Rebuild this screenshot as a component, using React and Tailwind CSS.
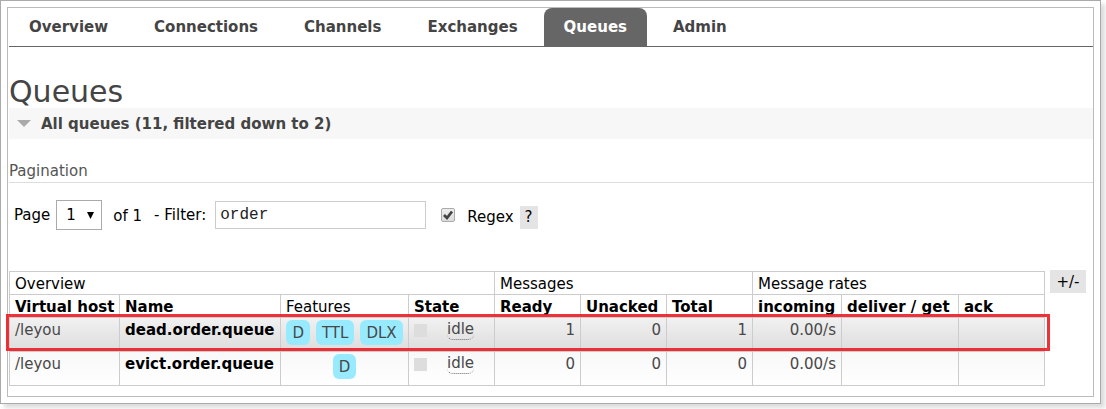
import { useState } from "react";

const tabs = ["Overview", "Connections", "Channels", "Exchanges", "Queues", "Admin"];

const queues = [
  {
    vhost: "/leyou",
    name: "dead.order.queue",
    features: ["D", "TTL", "DLX"],
    state: "idle",
    counts: [1, 0, 1],
    incoming: "0.00/s",
    row: "bg-linear-to-b from-[#f1f1f1] to-[#dcdcdc]",
  },
  {
    vhost: "/leyou",
    name: "evict.order.queue",
    features: ["D"],
    state: "idle",
    counts: [0, 0, 0],
    incoming: "0.00/s",
    row: "bg-linear-to-b from-[#f8f8f8] to-white",
  },
];

const cell = "border border-[#ccc] px-[5px] pt-[2px] pb-0 whitespace-nowrap";
const sortable = ["State", "Ready", "Unacked", "Total", "incoming", "deliver / get", "ack"];

function Nav() {
  return (
    <nav className="border-b border-[#666]">
      <ul className="flex gap-[6px]">
        {tabs.map((tab) => (
          <li key={tab}>
            <a
              href={"#" + tab.toLowerCase()}
              className={
                tab === "Queues"
                  ? "block rounded-t-lg bg-[#666] px-5 py-[9px] leading-5 font-bold text-white"
                  : "block px-5 py-[9px] leading-5 font-bold text-[#444]"
              }
            >
              {tab}
            </a>
          </li>
        ))}
      </ul>
    </nav>
  );
}

function Filters() {
  const [filter, setFilter] = useState("order");
  const [regex, setRegex] = useState(true);
  return (
    <form className="mt-[17px] flex h-[30px] items-center pl-[5px]" onSubmit={(e) => e.preventDefault()}>
      <label htmlFor="page">Page</label>
      <div className="ml-[6px] grid items-center">
        <select
          id="page"
          defaultValue="1"
          className="col-start-1 row-start-1 h-[30px] w-[46px] appearance-none border border-[#aaa] bg-white pl-[9px]"
        >
          <option>1</option>
        </select>
        <svg className="pointer-events-none col-start-1 row-start-1 mr-2 h-2 w-[7px] justify-self-end" viewBox="0 0 7 8">
          <path d="M0 1h7L3.500 8z" fill="#000" />
        </svg>
      </div>
      <span className="ml-[11px] pt-[2px]">of 1</span>
      <label htmlFor="filter" className="ml-3">- Filter:</label>
      <input
        id="filter"
        type="text"
        value={filter}
        onChange={(e) => setFilter(e.target.value)}
        className="ml-[9px] h-7 w-[211px] border border-[#ccc] px-1 font-['Liberation_Mono',monospace] text-base text-[#222]"
      />
      <div className="ml-[15px] grid">
        <input
          id="regex"
          type="checkbox"
          checked={regex}
          onChange={(e) => setRegex(e.target.checked)}
          className="col-start-1 row-start-1 size-[14px] appearance-none rounded-xs border border-[#aaa] bg-linear-to-b from-[#eee] to-[#ddd]"
        />
        {regex && (
          <svg className="pointer-events-none col-start-1 row-start-1 size-[14px]" viewBox="0 0 14 14">
            <path d="M3 7l3 3L11 3.500" fill="none" stroke="#444" strokeWidth="2.800" />
          </svg>
        )}
      </div>
      <label htmlFor="regex" className="ml-3 pt-1">Regex</label>
      <button type="button" className="mt-1 ml-[6px] h-[23px] w-[18px] bg-[#e4e4e4]">?</button>
    </form>
  );
}

function QueueTable() {
  return (
    <div className="relative min-w-0 flex-1">
      <table className="w-full table-fixed border-collapse leading-5">
        <colgroup>
          <col className="w-[110px]" />
          <col className="w-[161px]" />
          <col className="w-[128px]" />
          <col className="w-[86px]" />
          <col className="w-[86px]" />
          <col className="w-[86px]" />
          <col className="w-[86px]" />
          <col className="w-[89px]" />
          <col className="w-[117px]" />
          <col />
        </colgroup>
        <thead className="text-left">
          <tr className="h-[23px]">
            <th colSpan={4} className={cell + " font-normal"}>Overview</th>
            <th colSpan={3} className={cell + " font-normal"}>Messages</th>
            <th colSpan={3} className={cell + " font-normal"}>Message rates</th>
          </tr>
          <tr className="h-[23px]">
            <th className={cell}>Virtual host</th>
            <th className={cell}>Name</th>
            <th className={cell + " font-normal"}>Features</th>
            {sortable.map((title) => (
              <th key={title} className={cell}>{title}</th>
            ))}
          </tr>
        </thead>
        <tbody className="text-[#484848]">
          {queues.map((q) => (
            <tr key={q.name} className={"h-[34px] align-top " + q.row}>
              <td className={cell}>{q.vhost}</td>
              <td className={cell}>
                <a href={"#" + q.name} className="font-bold text-black">{q.name}</a>
              </td>
              <td className={cell}>
                <div className="flex justify-center gap-[6px]">
                  {q.features.map((f) => (
                    <span key={f} className="rounded-md bg-[#98ebff] px-[6px] pt-px leading-6">{f}</span>
                  ))}
                </div>
              </td>
              <td className={cell}>
                <div className="flex items-start">
                  <span className="mt-1 mr-5 size-[13px] bg-[#ddd]" />
                  <span className="rounded-md border-b border-dotted border-[#666] leading-[19px]">{q.state}</span>
                </div>
              </td>
              {q.counts.map((n, i) => (
                <td key={i} className={cell + " text-right"}>{n}</td>
              ))}
              <td className={cell + " text-right"}>{q.incoming}</td>
              <td className={cell} />
              <td className={cell} />
            </tr>
          ))}
        </tbody>
      </table>
      <div className="pointer-events-none absolute top-[43px] -right-[5px] -left-[3px] h-[37px] border-3 border-[#ed1c24]/90" />
    </div>
  );
}

export default function App() {
  return (
    <div className="bg-white pr-[5px] pb-[5px] font-['DejaVu_Sans',Verdana,sans-serif] text-[15px] leading-5 text-black">
      <div className="border border-[#aaa] p-[6px] shadow-[4px_4px_4px_#ddd]">
        <main className="border border-[#bbb] pb-[10px] pl-px">
          <Nav />
          <h1 className="mt-7 text-[30px] leading-[33px] text-[#444]">Queues</h1>
          <h2 className="bg-[#f7f7f7] font-bold text-[#444]">
            <button type="button" className="flex h-[31px] items-center pl-2">
              <svg className="mr-[10px] h-[7px] w-[14px]" viewBox="0 0 14 7">
                <path d="M0 0h14L7 7z" fill="#aaa" />
              </svg>
              All queues (11, filtered down to 2)
            </button>
          </h2>
          <h3 className="mt-[22px] border-b border-[#ddd] pb-[1px] text-[#555]">Pagination</h3>
          <Filters />
          <div className="mt-[41px] flex items-start gap-[5px] pr-[7px]">
            <QueueTable />
            <button type="button" className="-mt-px h-[23px] w-9 bg-[#e4e4e4]">+/-</button>
          </div>
        </main>
      </div>
    </div>
  );
}
